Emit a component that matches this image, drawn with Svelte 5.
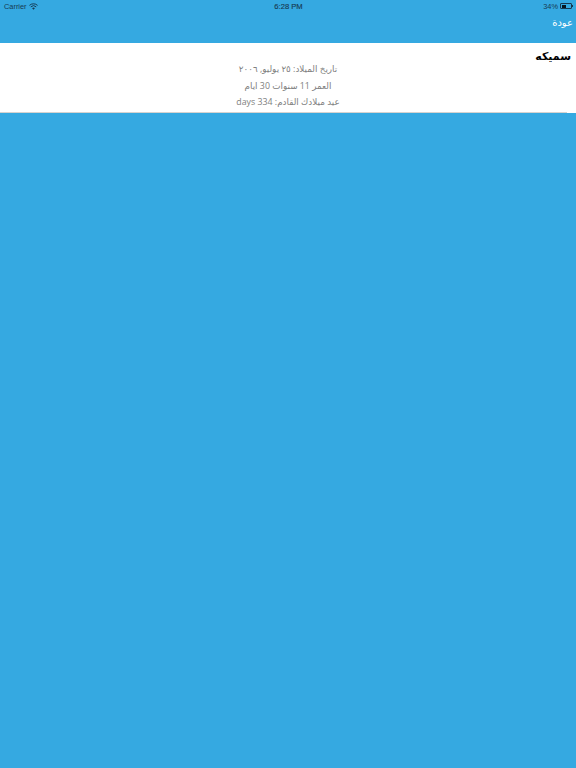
<script>
  const person = {
    name: "سميكه",
    rows: [
      "تاريخ الميلاد: ٢٥ يوليو, ٢٠٠٦",
      "العمر 11 سنوات 30 ايام",
      "عيد ميلادك القادم: 334 days",
    ],
  };
</script>

<div class="page">
  <header class="top">
    <div class="status">
      <div class="status-left">
        <span>Carrier</span>
        <svg class="wifi" viewBox="0 0 12 9" width="9" height="7" fill="none" stroke="#173a52" stroke-width="1.3" aria-hidden="true">
          <path d="M0.6 3 A8 8 0 0 1 11.4 3" />
          <path d="M2.4 5 A5.2 5.2 0 0 1 9.6 5" />
          <path d="M6 8.8 L4.2 6.8 A2.6 2.6 0 0 1 7.8 6.8 Z" fill="#173a52" stroke="none" />
        </svg>
      </div>
      <span class="time">6:28 PM</span>
      <div class="status-right">
        <span>34%</span>
        <div class="battery"><div class="charge"></div></div>
        <div class="nub"></div>
      </div>
    </div>
    <div class="nav">
      <button class="back">عودة</button>
    </div>
  </header>

  <section class="card">
    <h1>{person.name}</h1>
    {#each person.rows as row}
      <p dir="rtl">{row}</p>
    {/each}
  </section>
  <div class="rule"></div>
</div>

<style>
  :global(body) {
    margin: 0;
    background: #35a9e1;
  }

  .page {
    width: 576px;
    height: 768px;
    overflow: hidden;
    background: #35a9e1;
    font-family: "DejaVu Sans", "Noto Sans", sans-serif;
  }

  .top {
    height: 43px;
  }

  .status {
    display: grid;
    grid-template-columns: 1fr auto 1fr;
    align-items: center;
    height: 12px;
    padding: 0 3px 0 4px;
    font-family: "Liberation Sans", sans-serif;
    font-size: 7.4px;
    color: #173a52;
  }

  .status-left {
    display: flex;
    align-items: center;
    gap: 2px;
  }

  .time {
    font-size: 7.6px;
    -webkit-text-stroke: 0.15px #173a52;
  }

  .status-right {
    display: flex;
    align-items: center;
    justify-content: flex-end;
  }

  .battery {
    box-sizing: border-box;
    width: 12px;
    height: 6px;
    margin-left: 2px;
    border: 0.5px solid #173a52;
    border-radius: 1px;
    padding: 0.5px;
  }

  .charge {
    width: 45%;
    height: 100%;
    background: #06151f;
  }

  .nub {
    width: 1px;
    height: 2px;
    background: #173a52;
  }

  .nav {
    display: flex;
    justify-content: flex-end;
    padding: 3px 3px 0 0;
  }

  .back {
    border: none;
    padding: 0;
    background: transparent;
    color: #fff;
    font: inherit;
    font-size: 10px;
    line-height: 16px;
  }

  .card {
    height: 70px;
    background: #fff;
    text-align: center;
    overflow: hidden;
  }

  h1 {
    margin: 0;
    padding: 7px 5px 0 0;
    height: 11px;
    text-align: right;
    font-size: 11px;
    font-weight: 700;
    line-height: 14px;
    color: #000;
  }

  p {
    margin: 0;
    height: 16.5px;
    font-family: "Open Sans", "DejaVu Sans", sans-serif;
    font-size: 8.8px;
    line-height: 16.5px;
    color: #808080;
  }

  .rule {
    width: 567px;
    height: 1px;
    margin-top: -1px;
    position: relative;
    background: #d6d3d0;
  }
</style>
